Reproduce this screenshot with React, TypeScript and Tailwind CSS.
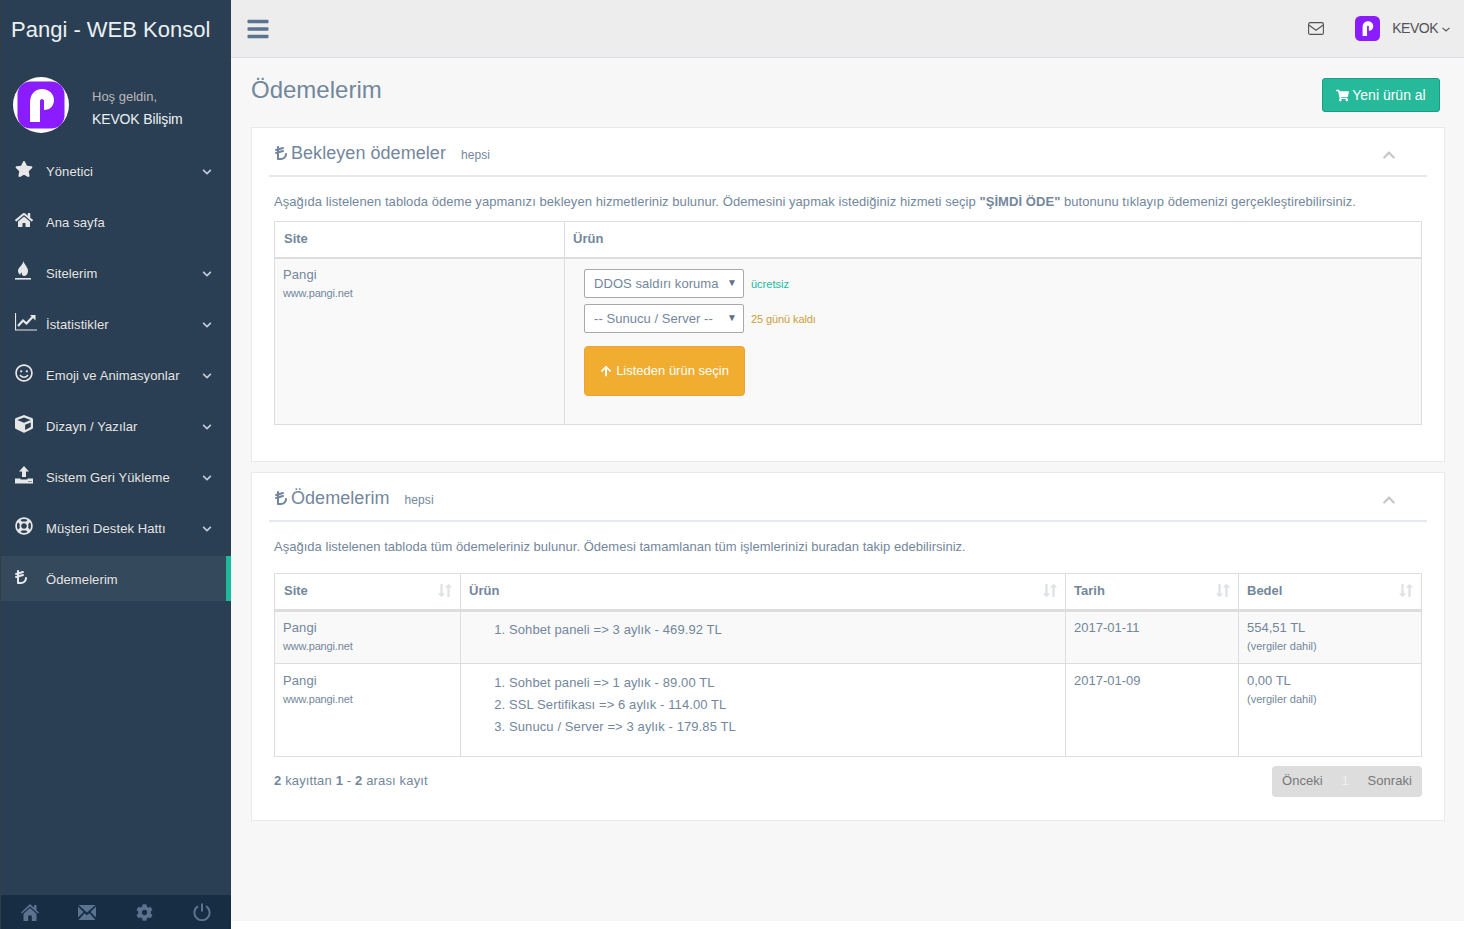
import React from "react";
import {
  FaStar, FaHome, FaChevronDown, FaChevronUp, FaRegSmile, FaCube, FaRegLifeRing, FaCog, FaBars,
  FaShoppingCart, FaArrowUp, FaLongArrowAltDown, FaLongArrowAltUp,
} from "react-icons/fa";
import { FaTurkishLiraSign } from "react-icons/fa6";

function PLogo({ size, round }: { size: number; round?: boolean }) {
  return (
    <svg width={size} height={size} viewBox="0 0 56 56" className="block shrink-0">
      {round ? (
        <>
          <circle cx="28" cy="28" r="28" fill="#fff" />
          <rect x="4.5" y="4.5" width="47" height="47" rx="13" fill="#8a1cff" />
        </>
      ) : (
        <rect x="0" y="0" width="56" height="56" rx="12" fill="#8a1cff" />
      )}
      <path
        d="M17 45V26C17 17 22 12 29 12C36 12 41 17 41 23C41 29 37 33 31 33V24C31 23 30 22 29 22C28 22 27 23 27 24V45Z"
        fill="#fff"
      />
    </svg>
  );
}

function SiteIcon() {
  return (
    <svg width="16" height="20" viewBox="0 0 16 20" className="block">
      <path d="M8.5 0C9.5 4 13 6 13 10C13 13 11 15 8.5 15C7 14 6.5 13 7 11.5C5.5 12 5 12.5 5.5 14C4 13 3 11.5 3 10C3 6 7.5 5 8.5 0Z" fill="#e7e7e7" />
      <rect x="0" y="17" width="16" height="1.6" fill="#e7e7e7" />
    </svg>
  );
}

function UploadIcon() {
  return (
    <svg width="18" height="18" viewBox="0 0 18 18" className="block">
      <path d="M9 0L14 5.5H11V11H7V5.5H4Z" fill="#e7e7e7" />
      <path d="M0 12.5H5.5V13.5H12.5V12.5H18V17.5H0Z" fill="#e7e7e7" />
      <rect x="13.5" y="15" width="1" height="1" fill="#2A3F54" />
      <rect x="15.5" y="15" width="1" height="1" fill="#2A3F54" />
    </svg>
  );
}

function LineChart() {
  return (
    <svg width="22" height="18" viewBox="0 0 22 18" className="block">
      <path d="M0.5 0V17H22" fill="none" stroke="#e7e7e7" strokeWidth="1.2" />
      <path d="M3 13L8 7.5L11.5 10.5L18 3.5" fill="none" stroke="#e7e7e7" strokeWidth="2.2" />
      <path d="M15 2H20.5V7.5Z" fill="#e7e7e7" />
    </svg>
  );
}

function FootHome() {
  return (
    <svg width="18" height="17" viewBox="0 0 18 17" className="block" fill="currentColor">
      <path d="M9 0L13 3.8V1H15.5V6.2L18 8.6L17 9.6L9 2.4L1 9.6L0 8.6Z" />
      <path d="M9 4L15.5 9.8V17H10.8V11.5H7.2V17H2.5V9.8Z" />
    </svg>
  );
}

function FootMail() {
  return (
    <svg width="18" height="15" viewBox="0 0 18 15" className="block" fill="currentColor">
      <path d="M0.5 0H17.5L9 7.5Z" />
      <path d="M0 1.5L5.5 7L0 12.5Z" />
      <path d="M18 1.5L12.5 7L18 12.5Z" />
      <path d="M0.5 15L6.5 8.2L9 10.2L11.5 8.2L17.5 15Z" />
    </svg>
  );
}

function FootPower() {
  return (
    <svg width="18" height="18" viewBox="0 0 18 18" className="block" fill="none" stroke="currentColor" strokeWidth="2">
      <path d="M5 3.2A7.6 7.6 0 1 0 13 3.2" />
      <path d="M9 0.5V8.5" />
    </svg>
  );
}

const menu: { icon: React.ReactNode; label: string; chev: boolean; active?: boolean }[] = [
  { icon: <FaStar size={18} />, label: "Yönetici", chev: true },
  { icon: <FaHome size={18} />, label: "Ana sayfa", chev: false },
  { icon: <SiteIcon />, label: "Sitelerim", chev: true },
  { icon: <LineChart />, label: "İstatistikler", chev: true },
  { icon: <FaRegSmile size={18} />, label: "Emoji ve Animasyonlar", chev: true },
  { icon: <FaCube size={18} />, label: "Dizayn / Yazılar", chev: true },
  { icon: <UploadIcon />, label: "Sistem Geri Yükleme", chev: true },
  { icon: <FaRegLifeRing size={18} />, label: "Müşteri Destek Hattı", chev: true },
  { icon: <FaTurkishLiraSign size={16} className="-ml-[2px]" />, label: "Ödemelerim", chev: false, active: true },
];

function Sidebar() {
  return (
    <aside className="w-[231px] shrink-0 h-[929px] flex flex-col bg-[#2A3F54] border-l border-[#333d47] text-[#ECF0F1]">
      <div className="h-[58px] flex items-center pl-[10px] text-[22px] text-[#ECF0F1] whitespace-nowrap">Pangi - WEB Konsol</div>
      <div className="h-[90px] pl-3 flex items-start pt-[19px]">
        <PLogo size={56} round />
        <div className="ml-[23px] mt-[11px]">
          <div className="text-[13px] leading-[18px] text-[#BAB8B8]">Hoş geldin,</div>
          <div className="text-[14px] leading-[18px] mt-[4px] text-[#ECF0F1] tracking-[-0.15px]">KEVOK Bilişim</div>
        </div>
      </div>
      <nav className="flex flex-col flex-1">
        {menu.map((m) => (
          <div
            key={m.label}
            className={
              "h-[45px] mb-[6px] shrink-0 flex items-center relative pl-[14px] " +
              (m.active ? "bg-[#35495D] border-r-[5px] border-[#1ABB9C]" : "")
            }
          >
            <span className="w-[31px] h-[24px] -mt-[3px] flex items-center text-[#E7E7E7]">{m.icon}</span>
            <span className="mt-[2px] text-[13px] tracking-[0.1px] text-[#E7E7E7] whitespace-nowrap [text-shadow:0_-1px_0_rgba(0,0,0,0.25)] font-normal">
              {m.label}
            </span>
            {m.chev && <FaChevronDown size={10} className="absolute left-[201px] top-[19px] text-[#C4CCDA]" />}
          </div>
        ))}
      </nav>
      <div className="h-[34px] bg-[#172D44] flex items-center text-[#5A738E]">
        <div className="w-1/4 flex justify-center"><FootHome /></div>
        <div className="w-1/4 flex justify-center"><FootMail /></div>
        <div className="w-1/4 flex justify-center"><FaCog size={17} /></div>
        <div className="w-1/4 flex justify-center"><FootPower /></div>
      </div>
    </aside>
  );
}

function SortIcon() {
  return (
    <span className="flex text-[#DFE3E7] -space-x-[8px]">
      <FaLongArrowAltDown size={15} />
      <FaLongArrowAltUp size={15} />
    </span>
  );
}

function PanelTitle({ title }: { title: string }) {
  return (
    <div className="h-[40px] pb-[6px] mb-[10px] border-b-2 border-[#E6E9ED] flex items-center pl-[5px] relative">
      <FaTurkishLiraSign size={16} className="text-[#73879C] -ml-[1px] mr-[2px]" />
      <span className="text-[18px] tracking-[0.05px] text-[#73879C] whitespace-nowrap">{title}</span>
      <span className="text-[12px] tracking-[0.1px] text-[#73879C] ml-[15px] mt-[4px]">hepsi</span>
      <FaChevronUp size={14} className="absolute right-[31px] top-[11px] text-[#C5C7CB]" />
    </div>
  );
}

function Site() {
  return (
    <>
      <div className="text-[13px] leading-[18px] tracking-[0.1px]">Pangi</div>
      <div className="text-[11px] leading-[18px] tracking-[-0.15px]">www.pangi.net</div>
    </>
  );
}

function Price({ v }: { v: string }) {
  return (
    <>
      <div className="leading-[18px]">{v}</div>
      <div className="text-[11px] leading-[18px]">(vergiler dahil)</div>
    </>
  );
}

function Select({ label }: { label: string }) {
  return (
    <div className="w-[160px] h-[29px] pt-[2px] bg-white border border-[#A9A9A9] rounded-[2px] pl-[9px] flex items-center relative text-[13px] text-[#73879C] whitespace-nowrap tracking-[0.05px]">
      {label}
      <span className="absolute right-[6px] top-[7px] text-[10px] leading-[12px] text-[#5f7186]">▼</span>
    </div>
  );
}

export default function App() {
  return (
    <div className="flex w-[1464px] h-[929px] overflow-hidden bg-white font-['Liberation_Sans',Arial,sans-serif] text-[13px] text-[#73879C]">
      <Sidebar />
      <div className="flex-1 min-w-0 h-[921px] bg-[#F7F7F7] flex flex-col">
        <header className="h-[58px] shrink-0 bg-[#EDEDED] border-b border-[#D9DEE4] flex items-center pl-[15px] pr-[14px]">
          <FaBars size={24} className="text-[#5A738E]" />
          <div className="ml-auto flex items-center">
            <svg width="16" height="13" viewBox="0 0 16 13" className="block text-[#515356]" fill="none" stroke="currentColor" strokeWidth="1.1">
              <rect x="0.6" y="0.6" width="14.8" height="11.8" rx="1.5" />
              <path d="M0.8 3L8 8.2L15.2 3" />
            </svg>
            <div className="ml-[31px]"><PLogo size={25} /></div>
            <span className="ml-[12px] text-[14px] tracking-[-0.5px] text-[#515356]">KEVOK</span>
            <svg width="8" height="5" viewBox="0 0 8 5" className="ml-[4px] mt-[1px] text-[#515356]" fill="none" stroke="currentColor" strokeWidth="1.1">
              <path d="M0.5 0.8L4 4L7.5 0.8" />
            </svg>
          </div>
        </header>
        <main className="pl-5 pr-[19px] flex flex-col">
          <div className="h-[69px] flex items-start justify-between">
            <h3 className="text-[24px] leading-[26px] mt-[19px] text-[#73879C]">Ödemelerim</h3>
            <button className="mt-[20px] mr-[5px] w-[118px] h-[34px] bg-[#26B99A] border border-[#169F85] rounded-[3px] text-white text-[14px] flex items-center justify-center">
              <FaShoppingCart size={13} className="mr-[3px]" />Yeni ürün al
            </button>
          </div>

          <section className="h-[335px] bg-white border border-[#E6E9ED] px-[17px] pt-[9px] mb-[10px]">
            <PanelTitle title="Bekleyen ödemeler" />
            <p className="pl-[5px] leading-[30px] text-[13px] tracking-[0.057px] whitespace-nowrap">
              Aşağıda listelenen tabloda ödeme yapmanızı bekleyen hizmetleriniz bulunur. Ödemesini yapmak istediğiniz hizmeti seçip <b>"ŞİMDİ ÖDE"</b> butonunu tıklayıp ödemenizi gerçekleştirebilirsiniz.
            </p>
            <table className="ml-[5px] mt-[4px] w-[1148px] border-collapse table-fixed">
              <thead>
                <tr className="h-[36px]">
                  <th className="w-[290px] border border-[#DDDDDD] border-b-2 text-left pl-[9px] pb-[2px] font-bold">Site</th>
                  <th className="border border-[#DDDDDD] border-b-2 text-left pl-[8px] pb-[2px] font-bold">Ürün</th>
                </tr>
              </thead>
              <tbody>
                <tr className="h-[167px] bg-[#F9F9F9] align-top">
                  <td className="border border-[#DDDDDD] pl-[8px] pt-[7px]"><Site /></td>
                  <td className="border border-[#DDDDDD] pl-[19px] pt-[10px]">
                    <div className="flex items-center gap-[7px]"><Select label="DDOS saldırı koruma" /><span className="mt-[2px] text-[11px] text-[#1ABB9C]">ücretsiz</span></div>
                    <div className="flex items-center gap-[7px] mt-[6px]"><Select label="-- Sunucu / Server --" /><span className="mt-[2px] text-[11px] tracking-[-0.1px] text-[#C9A13B]">25 günü kaldı</span></div>
                    <button className="mt-[13px] w-[161px] h-[50px] bg-[#F0AD2F] rounded-[4px] border border-[#EEA236] text-white text-[13px] flex items-center justify-center">
                      <FaArrowUp size={12} className="mr-[4px]" />Listeden ürün seçin
                    </button>
                  </td>
                </tr>
              </tbody>
            </table>
          </section>

          <section className="h-[349px] bg-white border border-[#E6E9ED] px-[17px] pt-[9px]">
            <PanelTitle title="Ödemelerim" />
            <p className="pl-[5px] leading-[30px] text-[13px] tracking-[0.02px] whitespace-nowrap">
              Aşağıda listelenen tabloda tüm ödemeleriniz bulunur. Ödemesi tamamlanan tüm işlemlerinizi buradan takip edebilirsiniz.
            </p>
            <table className="ml-[5px] mt-[11px] w-[1148px] border-collapse table-fixed">
              <thead>
                <tr className="h-[37px]">
                  {[["Site", "w-[186px] pl-[9px]"], ["Ürün", "w-[605px] pl-[8px]"], ["Tarih", "w-[173px] pl-[8px]"], ["Bedel", "pl-[8px]"]].map(([t, w]) => (
                    <th key={t} className={"border border-[#DDDDDD] border-b-[3px] text-left pr-[4px] pb-[2px] font-bold " + w}>
                      <div className="flex items-center justify-between">{t}<SortIcon /></div>
                    </th>
                  ))}
                </tr>
              </thead>
              <tbody>
                <tr className="h-[53px] bg-[#F9F9F9] align-top">
                  <td className="border border-[#DDDDDD] pl-[8px] pt-[7px]"><Site /></td>
                  <td className="border border-[#DDDDDD] pt-[7px] pl-[8px]">
                    <ol className="list-decimal pl-[40px] text-[13px] leading-[22px] tracking-[0.1px]"><li>Sohbet paneli =&gt; 3 aylık - 469.92 TL</li></ol>
                  </td>
                  <td className="border border-[#DDDDDD] pl-[8px] pt-[7px] leading-[18px]">2017-01-11</td>
                  <td className="border border-[#DDDDDD] pl-[8px] pt-[7px]"><Price v="554,51 TL" /></td>
                </tr>
                <tr className="h-[93px] bg-white align-top">
                  <td className="border border-[#DDDDDD] pl-[8px] pt-[8px]"><Site /></td>
                  <td className="border border-[#DDDDDD] pt-[8px] pl-[8px]">
                    <ol className="list-decimal pl-[40px] text-[13px] leading-[22px] tracking-[0.1px]">
                      <li>Sohbet paneli =&gt; 1 aylık - 89.00 TL</li>
                      <li>SSL Sertifikası =&gt; 6 aylık - 114.00 TL</li>
                      <li>Sunucu / Server =&gt; 3 aylık - 179.85 TL</li>
                    </ol>
                  </td>
                  <td className="border border-[#DDDDDD] pl-[8px] pt-[8px] leading-[18px]">2017-01-09</td>
                  <td className="border border-[#DDDDDD] pl-[8px] pt-[8px]"><Price v="0,00 TL" /></td>
                </tr>
              </tbody>
            </table>
            <div className="ml-[5px] w-[1148px] mt-[9px] flex items-center justify-between">
              <div className="text-[13px] tracking-[0.15px] pb-[2px]"><b>2</b> kayıttan <b>1</b> - <b>2</b> arası kayıt</div>
              <div className="h-[31px] w-[150px] pb-[2px] bg-[#DDDDDD] rounded-[4px] flex items-center justify-between px-[10px] text-[13px] tracking-[0.05px] text-[#777]">
                <span>Önceki</span><span className="text-[#f0f0f0]">1</span><span>Sonraki</span>
              </div>
            </div>
          </section>
        </main>
      </div>
    </div>
  );
}
